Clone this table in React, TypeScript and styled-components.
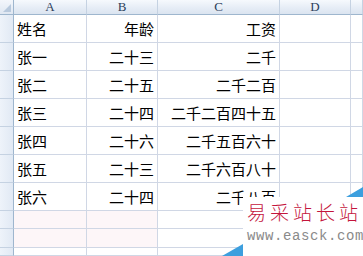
import { Fragment } from 'react';
import styled, { createGlobalStyle } from 'styled-components';

const GlobalStyle = createGlobalStyle`
  html, body {
    margin: 0;
    padding: 0;
    background: #ffffff;
    overflow: hidden;
  }
`;

const Page = styled.div`
  position: relative;
  width: 363px;
  height: 256px;
  overflow: hidden;
  background: #ffffff;
`;

const Sheet = styled.div`
  display: grid;
  grid-template-columns: 14px 73px 71px 122px 71px 1fr;
  grid-template-rows: 15px repeat(7, 28px) 18px 19px 1fr;
  width: 363px;
  height: 256px;
`;

const Corner = styled.div`
  position: relative;
  box-sizing: border-box;
  background: linear-gradient(#f3f6fb, #dfe7f2);
  border-right: 1px solid #9eb6ce;
  border-bottom: 1px solid #9eb6ce;

  &::after {
    content: '';
    position: absolute;
    right: 2px;
    bottom: 2px;
    border-left: 8px solid transparent;
    border-bottom: 8px solid #b8c9dd;
  }
`;

const ColHead = styled.div`
  box-sizing: border-box;
  display: flex;
  align-items: center;
  justify-content: center;
  background: linear-gradient(#f6f9fd 0%, #e6edf6 55%, #dbe4f0 100%);
  border-right: 1px solid #c5d2e2;
  border-bottom: 1px solid #9eb6ce;
  font-family: 'Liberation Serif', serif;
  font-size: 13px;
  color: #2c3e5c;
  line-height: 14px;
`;

const RowHead = styled.div`
  box-sizing: border-box;
  background: linear-gradient(90deg, #eef3fa, #e1e9f4);
  border-right: 1px solid #9eb6ce;
  border-bottom: 1px solid #c5d2e2;
`;

const Cell = styled.div<{ $align?: 'left' | 'right'; $tint?: boolean }>`
  box-sizing: border-box;
  display: flex;
  align-items: flex-end;
  justify-content: ${(p) => (p.$align === 'right' ? 'flex-end' : 'flex-start')};
  padding: 0 3px 3px 3px;
  background: ${(p) => (p.$tint ? '#fdf6f8' : '#ffffff')};
  border-right: 1px solid #d0d7e5;
  border-bottom: 1px solid #d0d7e5;
  font-family: 'Noto Sans CJK SC', 'Noto Sans', sans-serif;
  font-size: 15px;
  line-height: 20px;
  color: #000000;
  white-space: nowrap;
  overflow: hidden;
`;

// watermark pasted over the bottom-right corner of the screenshot
const Watermark = styled.div`
  position: absolute;
  left: 243px;
  top: 197px;
  right: 0;
  bottom: 0;
  background: #ffffff;
  display: flex;
  flex-direction: column;
  padding: 3px 0 0 4px;
  gap: 5px;
  overflow: hidden;
`;

const Brand = styled.div`
  font-family: 'Noto Sans CJK SC', sans-serif;
  font-weight: 300;
  font-size: 19px;
  line-height: 24px;
  letter-spacing: 4px;
  color: #c4153c;
  white-space: nowrap;
`;

const Site = styled.div`
  font-family: 'Liberation Mono', monospace;
  font-size: 14px;
  line-height: 14px;
  letter-spacing: 0.6px;
  color: #8a8a8a;
  white-space: nowrap;
`;

const Ribbon = styled.svg<{ $left: number; $top: number }>`
  position: absolute;
  left: ${(p) => p.$left}px;
  top: ${(p) => p.$top}px;
`;

const rows: [string, string, string][] = [
  ['姓名', '年龄', '工资'],
  ['张一', '二十三', '二千'],
  ['张二', '二十五', '二千二百'],
  ['张三', '二十四', '二千二百四十五'],
  ['张四', '二十六', '二千五百六十'],
  ['张五', '二十三', '二千六百八十'],
  ['张六', '二十四', '二千八百'],
];

export default function App() {
  return (
    <Page>
      <GlobalStyle />
      <Sheet>
        <Corner />
        {['A', 'B', 'C', 'D', ''].map((c, i) => (
          <ColHead key={i}>{c}</ColHead>
        ))}
        {rows.map((r, i) => (
          <Fragment key={`r${i}`}>
            <RowHead />
            <Cell>{r[0]}</Cell>
            <Cell $align="right">{r[1]}</Cell>
            <Cell $align="right">{r[2]}</Cell>
            <Cell />
            <Cell />
          </Fragment>
        ))}
        {[0, 1, 2].map((i) => (
          <Fragment key={`x${i}`}>
            <RowHead />
            <Cell $tint={i < 2} />
            <Cell $tint={i < 2} />
            <Cell />
            <Cell />
            <Cell />
          </Fragment>
        ))}
      </Sheet>
      <Ribbon $left={346} $top={187} width={17} height={10}>
        <polygon points="0,10 17,0 17,10" fill="#3d9fde" />
      </Ribbon>
      <Ribbon $left={222} $top={244} width={21} height={12}>
        <polygon points="0,12 21,0 21,12" fill="#3d9fde" />
      </Ribbon>
      <Watermark>
        <Brand>易采站长站</Brand>
        <Site>www.easck.com</Site>
      </Watermark>
    </Page>
  );
}
